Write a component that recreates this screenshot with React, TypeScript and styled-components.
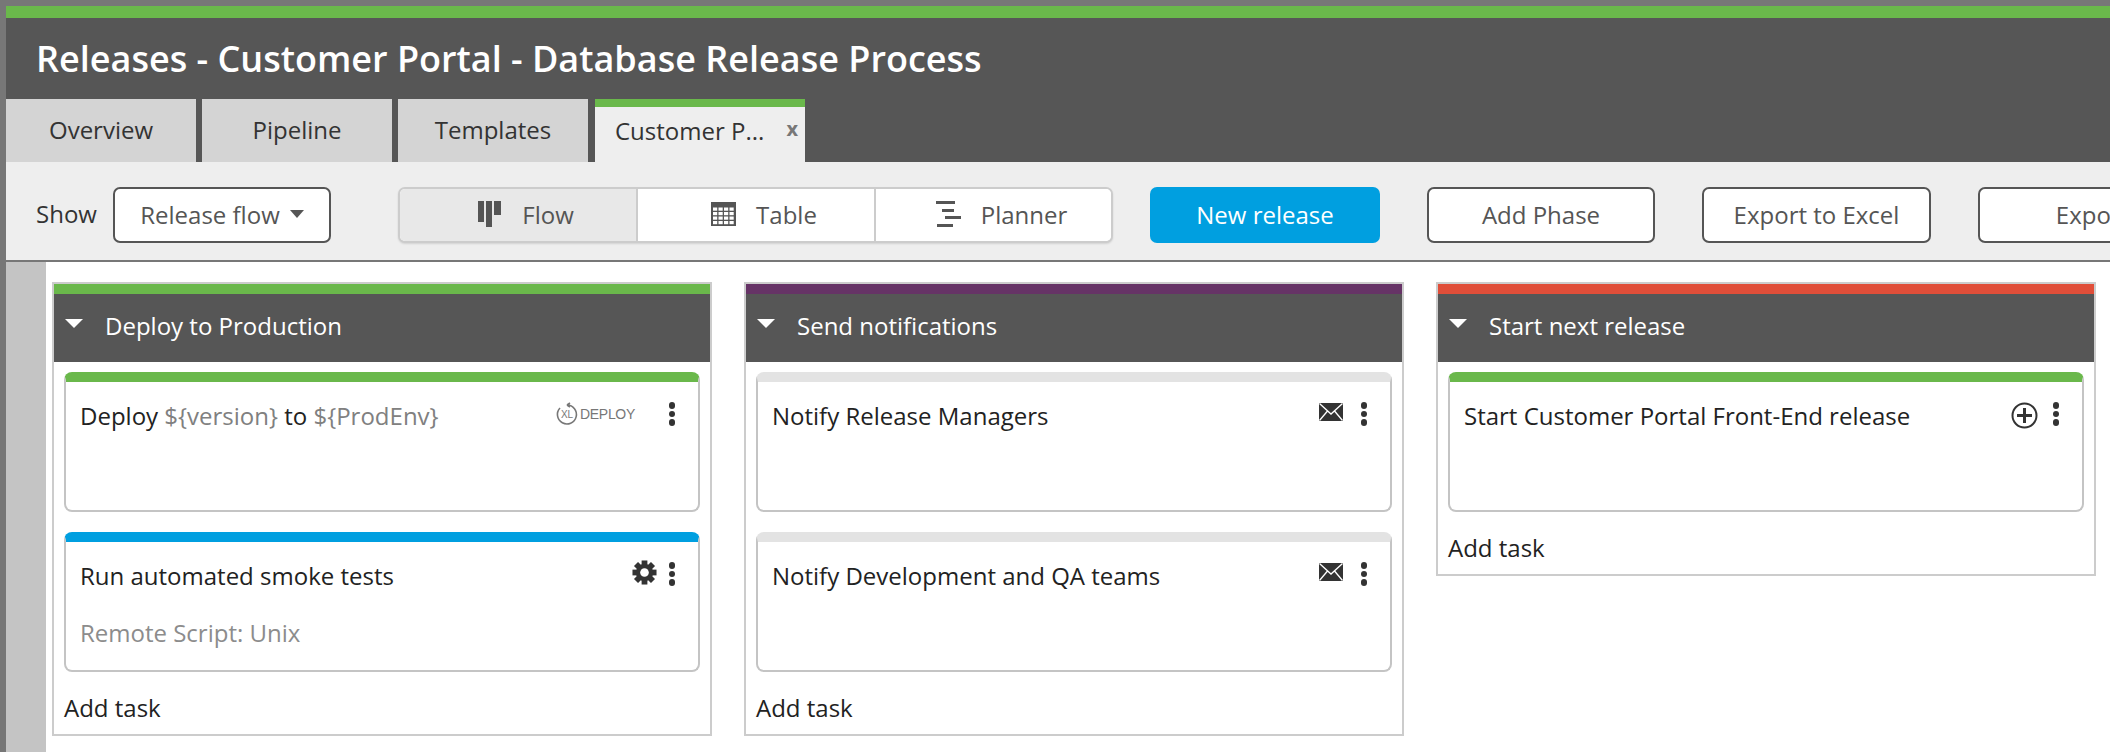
import styled, { createGlobalStyle } from "styled-components";

const GlobalStyle = createGlobalStyle`
    html, body {
        margin: 0;
        padding: 0;
        height: 752px;
        overflow: hidden;
        background: #777777;
        font-family: "Open Sans", "Liberation Sans", sans-serif;
    }
    * {
        box-sizing: border-box;
    }
`;

const Shell = styled.div`
    width: 2110px;
    height: 752px;
    overflow: hidden;
    padding: 6px 0 0 6px;
    background: #777777;
    display: flex;
    flex-direction: column;
`;
const Header = styled.header`
    flex: none;
    height: 156px;
    background: #565656;
    border-top: 12px solid #6ab84b;
    display: flex;
    flex-direction: column;
    justify-content: space-between;
`;
const Title = styled.h1`
    margin: 0;
    padding: 17px 0 0 30px;
    font-size: 36px;
    line-height: 48px;
    font-weight: 600;
    color: #ffffff;
`;
const Tabs = styled.nav`
    display: flex;
    gap: 6px;
`;
const Tab = styled.div`
    width: 190px;
    height: 63px;
    padding-bottom: 3px;
    background: #d4d4d4;
    color: #333333;
    font-size: 24px;
    display: flex;
    align-items: center;
    justify-content: center;
`;
const ActiveTab = styled.div`
    width: 210px;
    height: 63px;
    margin-left: 1px;
    padding: 0 7px 9px 20px;
    background: #eeeeee;
    border-top: 8px solid #6ab84b;
    color: #333333;
    font-size: 24px;
    display: flex;
    align-items: center;
    justify-content: space-between;
`;
const CloseMark = styled.span`
    margin-top: -4px;
    font-size: 20px;
    font-weight: 700;
    color: #777777;
`;
const Toolbar = styled.div`
    flex: none;
    height: 100px;
    padding: 25px 0 0 30px;
    background: #eeeeee;
    border-bottom: 2px solid #777777;
    display: flex;
    align-items: flex-start;
`;
const ShowLabel = styled.span`
    flex: none;
    width: 77px;
    line-height: 54px;
    font-size: 24px;
    color: #333333;
`;
const Button = styled.div<{ $width: number }>`
    flex: none;
    width: ${(p) => p.$width}px;
    height: 56px;
    padding-bottom: 2px;
    background: #ffffff;
    border: 2px solid #555555;
    border-radius: 7px;
    color: #555555;
    font-size: 24px;
    display: flex;
    align-items: center;
    justify-content: center;
`;
const SelectButton = styled(Button)`
    gap: 10px;
`;
const Caret = styled.span`
    width: 0;
    height: 0;
    border-left: 7px solid transparent;
    border-right: 7px solid transparent;
    border-top: 8px solid #555555;
`;
const Segments = styled.div`
    flex: none;
    width: 715px;
    height: 56px;
    margin: 0 37px 0 67px;
    display: grid;
    grid-template-columns: 238px 238px 1fr;
    border: 2px solid #cccccc;
    border-radius: 7px;
    background: #ffffff;
    box-shadow: 0 1px 2px rgba(0, 0, 0, 0.12);
    overflow: hidden;
`;
const Segment = styled.div<{ $active?: boolean }>`
    padding: 0 0 2px 16px;
    display: flex;
    align-items: center;
    justify-content: center;
    gap: 20px;
    font-size: 24px;
    color: #555555;
    background: ${(p) => (p.$active ? "#e8e8e8" : "#ffffff")};
    border-right: 2px solid #cccccc;
    &:last-child {
        border-right: 0;
    }
`;
const PrimaryButton = styled.div`
    flex: none;
    width: 230px;
    height: 56px;
    margin-right: 47px;
    padding-bottom: 2px;
    background: #009fe0;
    border-radius: 7px;
    color: #ffffff;
    font-size: 24px;
    display: flex;
    align-items: center;
    justify-content: center;
`;
const ActionButton = styled(Button)`
    margin-right: 47px;
`;
const Board = styled.main`
    flex: 1;
    display: flex;
    background: #ffffff;
`;
const Rail = styled.div`
    flex: none;
    width: 40px;
    background: #c4c4c4;
`;
const Phases = styled.div`
    flex: 1;
    padding: 20px 0 0 6px;
    display: flex;
    align-items: flex-start;
    gap: 32px;
`;
const Phase = styled.section`
    flex: none;
    width: 660px;
    border: 2px solid #cccccc;
    background: #ffffff;
`;
const PhaseHeader = styled.div<{ $color: string }>`
    height: 78px;
    padding: 0 0 5px 11px;
    border-top: 10px solid ${(p) => p.$color};
    background: #565656;
    color: #ffffff;
    font-size: 24px;
    display: flex;
    align-items: center;
    gap: 22px;
`;
const PhaseCaret = styled.span`
    width: 0;
    height: 0;
    margin-top: -4px;
    border-left: 9px solid transparent;
    border-right: 9px solid transparent;
    border-top: 9px solid #ffffff;
`;
const PhaseBody = styled.div`
    padding: 10px 10px 0;
    display: flex;
    flex-direction: column;
    gap: 20px;
`;
const Card = styled.article<{ $color: string }>`
    height: 140px;
    padding: 16px 19px 0 14px;
    border: 2px solid #c4c4c4;
    border-top: 10px solid ${(p) => p.$color};
    border-radius: 8px;
    display: flex;
    flex-direction: column;
`;
const CardTop = styled.div`
    display: flex;
    justify-content: space-between;
`;
const CardTitle = styled.div`
    font-size: 24px;
    line-height: 36px;
    color: #222222;
`;
const Variable = styled.span`
    color: #808080;
`;
const CardIcons = styled.div`
    display: flex;
    align-items: flex-start;
    height: 32px;
    margin-top: 4px;
`;
const IconSlot = styled.div<{ $gap: number; $top: number }>`
    flex: none;
    display: flex;
    margin-right: ${(p) => p.$gap}px;
    margin-top: ${(p) => p.$top}px;
`;
const Kebab = styled.div`
    flex: none;
    width: 14px;
    display: flex;
    flex-direction: column;
    align-items: center;
    gap: 2px;
    & > i {
        width: 6.5px;
        height: 6.5px;
        border-radius: 50%;
        background: #333333;
    }
`;
const CardNote = styled.div`
    margin-top: 21px;
    font-size: 24px;
    line-height: 36px;
    color: #8c8c8c;
`;
const AddTask = styled.div`
    padding: 8px 10px 0;
    height: 62px;
    font-size: 24px;
    color: #222222;
    display: flex;
    align-items: center;
`;
const DeployLogo = styled.div`
    display: flex;
    align-items: center;
    gap: 1px;
    color: #777777;
`;
const DeployWord = styled.span`
    font-family: "Liberation Sans", sans-serif;
    font-size: 14px;
    letter-spacing: -0.3px;
`;

function FlowIcon() {
    return (
        <svg width="24" height="26" viewBox="0 0 24 26" fill="#555555">
            <rect x="0" y="0" width="6" height="21" />
            <rect x="8" y="0" width="6" height="26" />
            <rect x="16" y="0" width="7" height="14" />
        </svg>
    );
}

function TableIcon() {
    return (
        <svg width="25" height="24" viewBox="0 0 25 24">
            <rect x="0" y="0" width="25" height="24" fill="#555555" />
            {[0, 1, 2, 3].map((row) =>
                [0, 1, 2, 3].map((col) => (
                    <rect key={`${row}-${col}`} x={2 + col * 5.5} y={5.5 + row * 4.5} width="4.2" height="3.2" fill="#ffffff" />
                ))
            )}
        </svg>
    );
}

function PlannerIcon() {
    return (
        <svg width="25" height="26" viewBox="0 0 25 26" fill="#555555">
            <rect x="0" y="0" width="19" height="3" />
            <rect x="6" y="8" width="12" height="3" />
            <rect x="9" y="15" width="16" height="3" />
            <rect x="1" y="23" width="16" height="3" />
        </svg>
    );
}

function MailIcon() {
    return (
        <svg width="24" height="18" viewBox="0 0 24 18">
            <rect width="24" height="18" fill="#333333" />
            <path d="M0.5 0.5 L12 11 L23.5 0.5 M0.5 17.5 L8.5 8 M23.5 17.5 L15.5 8" fill="none" stroke="#ffffff" strokeWidth="1.3" />
        </svg>
    );
}

function GearIcon() {
    return (
        <svg width="25" height="25" viewBox="0 0 26 26">
            <g fill="#333333">
                {[0, 45, 90, 135].map((deg) => (
                    <rect key={deg} x="10" y="0.5" width="6" height="25" transform={`rotate(${deg} 13 13)`} />
                ))}
                <circle cx="13" cy="13" r="9" />
            </g>
            <circle cx="13" cy="13" r="4.5" fill="#ffffff" />
        </svg>
    );
}

function PlusCircleIcon() {
    return (
        <svg width="27" height="27" viewBox="0 0 27 27" fill="none" stroke="#333333">
            <circle cx="13.5" cy="13.5" r="12" strokeWidth="2" />
            <path d="M13.5 6 V21 M6 13.5 H21" strokeWidth="3" />
        </svg>
    );
}

function XlCircle() {
    return (
        <svg width="24" height="24" viewBox="0 0 24 24" fill="none" stroke="#777777">
            <path d="M12 3 A9.5 9.5 0 1 1 5 6 M12 3 L15 1 M12 3 L15 5" strokeWidth="1.6" />
            <text x="12" y="16" fontSize="10" textAnchor="middle" fill="#777777" stroke="none" fontFamily="Liberation Sans">XL</text>
        </svg>
    );
}

function Dots() {
    return (
        <Kebab>
            <i />
            <i />
            <i />
        </Kebab>
    );
}

export default function App() {
    return (
        <Shell>
            <GlobalStyle />
            <Header>
                <Title>Releases - Customer Portal - Database Release Process</Title>
                <Tabs>
                    <Tab>Overview</Tab>
                    <Tab>Pipeline</Tab>
                    <Tab>Templates</Tab>
                    <ActiveTab>
                        Customer P...
                        <CloseMark>x</CloseMark>
                    </ActiveTab>
                </Tabs>
            </Header>
            <Toolbar>
                <ShowLabel>Show</ShowLabel>
                <SelectButton $width={218}>
                    Release flow
                    <Caret />
                </SelectButton>
                <Segments>
                    <Segment $active>
                        <FlowIcon />
                        Flow
                    </Segment>
                    <Segment>
                        <TableIcon />
                        Table
                    </Segment>
                    <Segment>
                        <PlannerIcon />
                        Planner
                    </Segment>
                </Segments>
                <PrimaryButton>New release</PrimaryButton>
                <ActionButton $width={228}>Add Phase</ActionButton>
                <ActionButton $width={229}>Export to Excel</ActionButton>
                <ActionButton $width={229}>Export</ActionButton>
            </Toolbar>
            <Board>
                <Rail />
                <Phases>
                    <Phase>
                        <PhaseHeader $color="#6ab84b">
                            <PhaseCaret />
                            Deploy to Production
                        </PhaseHeader>
                        <PhaseBody>
                            <Card $color="#6ab84b">
                                <CardTop>
                                    <CardTitle>
                                        Deploy <Variable>{"${version}"}</Variable> to <Variable>{"${ProdEnv}"}</Variable>
                                    </CardTitle>
                                    <CardIcons>
                                        <IconSlot $gap={30} $top={0}>
                                            <DeployLogo>
                                                <XlCircle />
                                                <DeployWord>DEPLOY</DeployWord>
                                            </DeployLogo>
                                        </IconSlot>
                                        <Dots />
                                    </CardIcons>
                                </CardTop>
                            </Card>
                            <Card $color="#009fe0">
                                <CardTop>
                                    <CardTitle>Run automated smoke tests</CardTitle>
                                    <CardIcons>
                                        <IconSlot $gap={8} $top={-2}>
                                            <GearIcon />
                                        </IconSlot>
                                        <Dots />
                                    </CardIcons>
                                </CardTop>
                                <CardNote>Remote Script: Unix</CardNote>
                            </Card>
                        </PhaseBody>
                        <AddTask>Add task</AddTask>
                    </Phase>
                    <Phase>
                        <PhaseHeader $color="#663366">
                            <PhaseCaret />
                            Send notifications
                        </PhaseHeader>
                        <PhaseBody>
                            <Card $color="#e3e3e3">
                                <CardTop>
                                    <CardTitle>Notify Release Managers</CardTitle>
                                    <CardIcons>
                                        <IconSlot $gap={14} $top={1}>
                                            <MailIcon />
                                        </IconSlot>
                                        <Dots />
                                    </CardIcons>
                                </CardTop>
                            </Card>
                            <Card $color="#e3e3e3">
                                <CardTop>
                                    <CardTitle>Notify Development and QA teams</CardTitle>
                                    <CardIcons>
                                        <IconSlot $gap={14} $top={1}>
                                            <MailIcon />
                                        </IconSlot>
                                        <Dots />
                                    </CardIcons>
                                </CardTop>
                            </Card>
                        </PhaseBody>
                        <AddTask>Add task</AddTask>
                    </Phase>
                    <Phase>
                        <PhaseHeader $color="#e04e39">
                            <PhaseCaret />
                            Start next release
                        </PhaseHeader>
                        <PhaseBody>
                            <Card $color="#6ab84b">
                                <CardTop>
                                    <CardTitle>Start Customer Portal Front-End release</CardTitle>
                                    <CardIcons>
                                        <IconSlot $gap={11} $top={0}>
                                            <PlusCircleIcon />
                                        </IconSlot>
                                        <Dots />
                                    </CardIcons>
                                </CardTop>
                            </Card>
                        </PhaseBody>
                        <AddTask>Add task</AddTask>
                    </Phase>
                </Phases>
            </Board>
        </Shell>
    );
}
